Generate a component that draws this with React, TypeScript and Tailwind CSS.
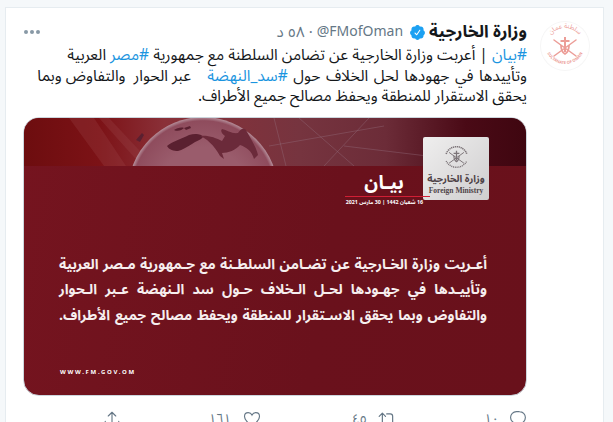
import React from "react";

const ff = { fontFamily: '"Noto Sans Arabic","Noto Sans","DejaVu Sans",sans-serif' };

function Crest({ className, color, ring }: { className?: string; color: string; ring?: boolean }) {
  return (
    <svg viewBox="0 0 48 48" className={className} fill="none" stroke={color}>
      <defs>
        <path id="ringTop" d="M6 24a18 18 0 0 1 36 0" />
        <path id="ringBottom" d="M4 22a20 20 0 0 0 40 0" />
      </defs>
      {ring ? (
        <g stroke="none" fill={color}>
          <text fontSize="6.500"><textPath href="#ringTop" startOffset="50%" textAnchor="middle">سلطنة عمان</textPath></text>
          <text fontSize="4" fontWeight="700" dir="ltr"><textPath href="#ringBottom" startOffset="50%" textAnchor="middle">SULTANATE OF OMAN</textPath></text>
        </g>
      ) : (
        <>
          <path d="M8 20a17 17 0 0 1 32 0" strokeWidth="2.400" strokeDasharray="2 1" />
          <path d="M8 31a18 18 0 0 0 32 0" strokeWidth="2.200" strokeDasharray="1.600 1.200" />
        </>
      )}
      <path d="M13 34 35 18M35 34 13 18" strokeWidth="1.500" strokeLinecap="round" />
      <path d="M24 15v15M19.500 19h9" strokeWidth="2" />
      <path d="M20 23c0 5 2 8 4 9 2-1 4-4 4-9" strokeWidth="1.800" />
    </svg>
  );
}

function Action({ count, children, className }: { count?: string; children: React.ReactNode; className: string }) {
  return (
    <div className={`flex items-start ${className}`}>
      {children}
      {count && <span className="text-[13px] leading-[18px] text-[#657786]">{count}</span>}
    </div>
  );
}

const line = "[text-align:justify] [text-align-last:justify]";

export default function App() {
  return (
    <div dir="rtl" style={ff} className="h-[422px] w-[613px] overflow-hidden bg-[#f5f8fa]">
      <div className="ml-[5px] mr-[9px] mt-[7px] h-[500px] border border-[#e6ecf0] bg-white">
        <div className="flex gap-[14px] pl-[17px] pr-[14px] pt-[14px]">
          <div className="h-[48px] w-[48px] shrink-0 rounded-full bg-white shadow-[0_0_0_1px_#f6f6f6]">
            <Crest className="h-[48px] w-[48px]" color="#ec9d97" ring />
          </div>
          <div className="min-w-0 flex-1">
            <div className="flex h-[20px] items-center">
              <span className="text-[17px] font-bold leading-[20px] text-[#14171a]">وزارة الخارجية</span>
              <svg viewBox="0 0 24 24" className="mr-[3px] ml-[6px] h-[17px] w-[17px]" fill="#1da1f2">
                <path d="M22.500 12.500c0-1.580-.875-2.950-2.148-3.600.154-.435.238-.905.238-1.400 0-2.210-1.710-3.998-3.818-3.998-.470 0-.920.084-1.336.250C14.818 2.415 13.510 1.500 12 1.500s-2.816.917-3.437 2.250c-.415-.165-.866-.250-1.336-.250-2.110 0-3.818 1.790-3.818 4 0 .494.083.964.237 1.400-1.272.650-2.147 2.018-2.147 3.600 0 1.495.782 2.798 1.942 3.486-.020.170-.032.340-.032.514 0 2.210 1.708 4 3.818 4 .470 0 .920-.086 1.335-.250.620 1.334 1.926 2.250 3.437 2.250 1.512 0 2.818-.916 3.437-2.250.415.163.865.248 1.336.248 2.110 0 3.818-1.790 3.818-4 0-.174-.012-.344-.033-.513 1.158-.687 1.943-1.990 1.943-3.484zm-6.616-3.334l-4.334 6.500c-.145.217-.382.334-.625.334-.143 0-.288-.040-.416-.126l-.115-.094-2.415-2.415c-.293-.293-.293-.768 0-1.060s.768-.294 1.060 0l1.770 1.767 3.825-5.740c.230-.345.696-.436 1.040-.207.346.230.440.696.210 1.040z" />
              </svg>
              <span dir="ltr" className="text-[14px] leading-[20px] text-[#657786]">@FMofOman</span>
              <span className="mx-[4px] text-[15px] leading-[20px] text-[#657786]">·</span>
              <span className="text-[15px] leading-[20px] text-[#657786]">٥٨ د</span>
              <div className="mr-auto flex gap-[2px] pl-[1px]">
                <span className="h-[4px] w-[4px] rounded-full bg-[#8899a6]" />
                <span className="h-[4px] w-[4px] rounded-full bg-[#8899a6]" />
                <span className="h-[4px] w-[4px] rounded-full bg-[#8899a6]" />
              </div>
            </div>
            <div className="mt-[3px] text-[15.500px] leading-[20.500px] text-[#14171a]">
              <p className="whitespace-nowrap">
                <span className="text-[#1b95e0]">#بيان</span> | أعربت وزارة الخارجية عن تضامن السلطنة مع جمهورية <span className="text-[#1b95e0]">#مصر</span> العربية
              </p>
              <p className="whitespace-nowrap">
                <span className="[word-spacing:1.500px]">وتأييدها في جهودها لحل الخلاف حول </span><span className="text-[#1b95e0]">#سد_النهضة</span>&nbsp;&nbsp;&nbsp; عبر الحوار&nbsp; والتفاوض وبما
              </p>
              <p className="whitespace-nowrap">يحقق الاستقرار للمنطقة ويحفظ مصالح جميع الأطراف.</p>
            </div>
            <div className="relative mt-[10px] h-[279px] w-[504px] overflow-hidden rounded-[16px] border border-[#ccd6dd] bg-[linear-gradient(100deg,#75141f,#6a111c_60%,#69111b)]">
              <svg viewBox="0 0 502 48" preserveAspectRatio="none" className="absolute inset-x-0 top-0 h-[48px] w-full">
                <defs>
                  <linearGradient id="band" x1="0" x2="1" y1="0" y2="0">
                    <stop offset="0" stopColor="#6d0d0f" />
                    <stop offset="0.15" stopColor="#7c1216" />
                    <stop offset="0.28" stopColor="#8a3038" />
                    <stop offset="0.55" stopColor="#76343f" />
                    <stop offset="0.72" stopColor="#6c2c38" />
                    <stop offset="0.88" stopColor="#4a0a16" />
                    <stop offset="1" stopColor="#3f0610" />
                  </linearGradient>
                  <radialGradient id="globe" cx="0.5" cy="0.5" r="0.5">
                    <stop offset="0.6" stopColor="#9a5c6c" />
                    <stop offset="0.95" stopColor="#8f4c5d" />
                    <stop offset="1" stopColor="#b58f9b" />
                  </radialGradient>
                </defs>
                <rect width="502" height="48" fill="url(#band)" />
                <path d="M45 0 80 48h22L70 0zM85 0l45 48h-12L75 0z" fill="#a04a50" fillOpacity="0.25" />
                <circle cx="179" cy="74" r="75" fill="url(#globe)" />
                <path d="M143 28c6-5 14-7 22-11 6-2 13-1 14 2-2 3-7 4-11 7-5 3-10 6-14 7-4 0-9-1-11-5zM150 12c3-2 7-3 10-2-2 2-6 4-10 2zM112 22l6-7 2 2-4 7zM160 10l6-2 1 2-5 2z" fill="#5a2030" />
                <path d="M176 18c6 2 14 9 20 20l4 3-2-6c6 0 14-3 18-8 6 2 12 6 14 14l4-4c-2-9-8-17-12-25-3-3-6 0-8 3-6 1-11-3-16-4-2 2 0 5 3 7l-3 5c-6-3-14-6-22-5z" fill="#6b2a3a" />
                <path d="M250 0 262 48M275 0 330 48M245 28 360 8M320 28 420 40M345 0 300 48" stroke="#94707f" strokeWidth="0.400" />
              </svg>
              <div className="relative flex h-full flex-col text-white">
                <div className="mr-[37px] mt-[19px] flex items-start">
                  <div className="flex h-[63px] w-[66px] shrink-0 flex-col items-center rounded-[2px] bg-[linear-gradient(135deg,#efeeee,#cfcecf)] pt-[4px] text-[#4f4347]">
                    <Crest className="h-[31px] w-[31px]" color="#7c7478" />
                    <span className="text-[10px] font-bold leading-[14px]">وزارة الخارجية</span>
                    <span className="text-[7.500px] font-bold leading-[9px]" style={{ fontFamily: '"Liberation Serif",serif' }} dir="ltr">Foreign Ministry</span>
                  </div>
                  <div className="relative mt-[36px] flex w-[78px] flex-col items-center">
                    <span className="text-[19px] font-bold leading-[20px]">بيـان</span>
                    <span className="-mr-[7px] mt-[3px] h-[1px] w-[85px] self-start bg-[#d11f35]" />
                    <span className="mt-[1px] self-start whitespace-nowrap text-[5.300px] font-bold leading-[9px]">16 شعبان 1442 | 30 مارس 2021</span>
                  </div>
                </div>
                <div className="ml-[35px] mr-[39px] mt-[45px] text-[14px] font-bold leading-[25.500px] text-[#f6eeee]">
                  <p className={line}>أعـريت وزارة الخـارجية عن تضـامن السلطـنة مع جـمهورية مـصر العربية</p>
                  <p className={line}>وتأييـدها في جهـودها لحـل الـخلاف حـول سد الـنهضة عـبر الـحوار</p>
                  <p className={line}>والتفاوض وبما يحقق الاسـتقرار للمنطقة ويحفظ مصالح جميع الأطراف.</p>
                </div>
                <p dir="ltr" className="ml-[36px] mt-[40px] text-[6px] font-bold leading-[8px] tracking-[1.700px]">WWW.FM.GOV.OM</p>
              </div>
            </div>
            <div className="mt-[14px] flex text-[#657786]">
              <Action count="١٠" className="w-[130px] gap-[10px]">
                <svg viewBox="0 0 24 24" className="h-[18px] w-[18px]" fill="none" stroke="currentColor" strokeWidth="1.500"><path d="M14.046 2.242l-4.148-.010h-.002c-4.374 0-7.800 3.427-7.800 7.802 0 4.098 3.186 7.206 7.465 7.370v3.828c0 .108.044.286.120.403.142.225.384.347.632.347.138 0 .277-.038.402-.118.264-.168 6.473-4.140 8.088-5.506 1.902-1.610 3.040-3.970 3.043-6.312v-.017c-.006-4.367-3.430-7.787-7.800-7.788z" /></svg>
              </Action>
              <Action count="٤٥" className="w-[136px] gap-[11px]">
                <svg viewBox="0 0 24 24" className="h-[19px] w-[19px]" fill="none" stroke="currentColor" strokeWidth="1.500" strokeLinecap="round" strokeLinejoin="round"><path d="M1.500 8 5.500 4l4 4M5.500 4.500V16c0 1.700 1.300 3 3 3H13M22.500 16l-4 4-4-4M18.500 19.500V8c0-1.700-1.300-3-3-3H11" /></svg>
              </Action>
              <Action count="١٦١" className="w-[140px] gap-[12px]">
                <svg viewBox="0 0 24 24" className="h-[18px] w-[18px]" fill="none" stroke="currentColor" strokeWidth="1.500"><path d="M12 21C9 19 2 14 2 8.500 2 5.500 4.300 3.500 7 3.500c2.200 0 4 1.200 5 3.300 1-2.100 2.800-3.300 5-3.300 2.700 0 5 2 5 5 0 5.500-7 10.500-10 12.500z" /></svg>
              </Action>
              <Action className="w-[20px]">
                <svg viewBox="0 0 24 24" className="h-[18px] w-[18px]" fill="none" stroke="currentColor" strokeWidth="1.500" strokeLinecap="round" strokeLinejoin="round"><path d="M12 16V3M7 8l5-5 5 5M3 15v4c0 1.100.9 2 2 2h14c1.100 0 2-.9 2-2v-4" /></svg>
              </Action>
            </div>
          </div>
        </div>
      </div>
    </div>
  );
}
